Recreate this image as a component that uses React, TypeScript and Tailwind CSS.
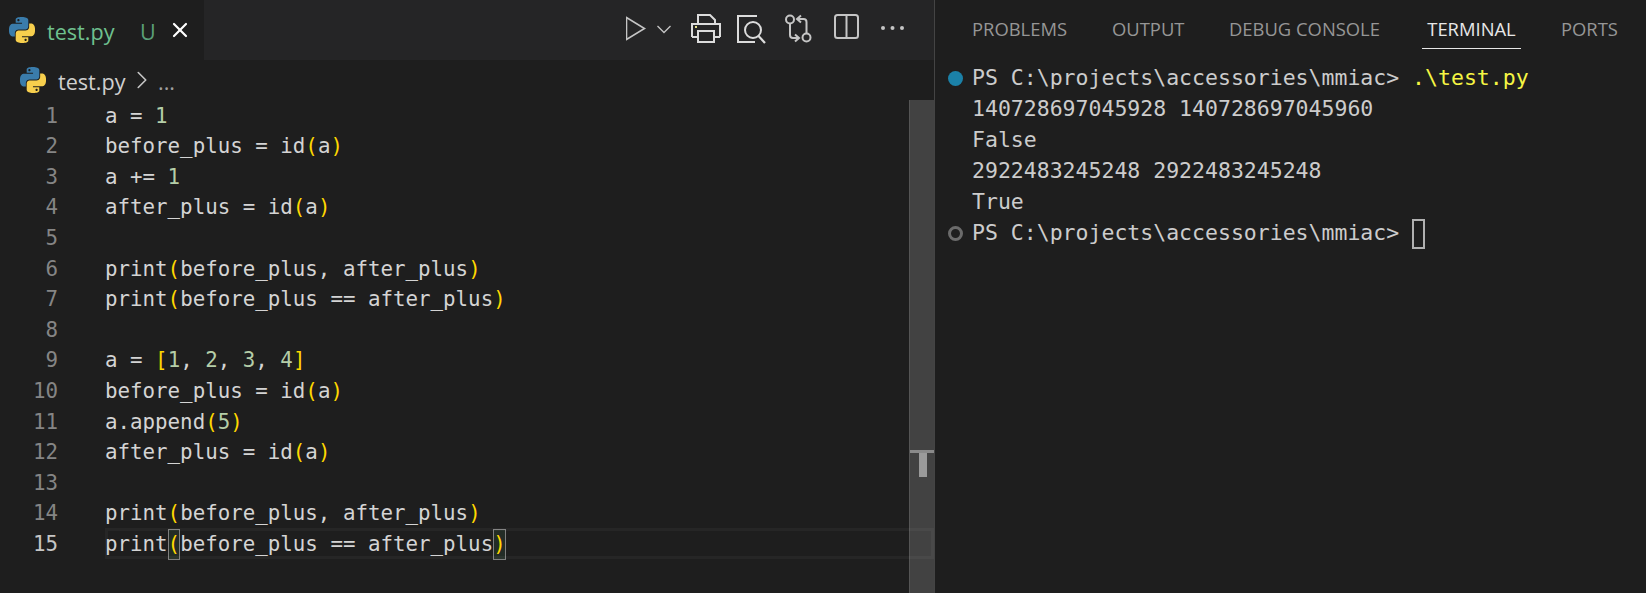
import { ChevronRight, X } from 'lucide-react';
import React from 'react';

const BLUE = 'M14.25.18l.9.2.73.26.59.3.45.32.34.34.25.34.16.33.1.3.04.26.02.2-.01.13V8.5l-.05.63-.13.55-.21.46-.26.38-.3.31-.33.25-.35.19-.35.14-.33.1-.3.07-.26.04-.21.02H8.77l-.69.05-.59.14-.5.22-.41.27-.33.32-.27.35-.2.36-.15.37-.1.35-.07.32-.04.27-.02.21v3.06H3.17l-.21-.03-.28-.07-.32-.12-.35-.18-.36-.26-.36-.36-.35-.46-.32-.59-.28-.73-.21-.88-.14-1.05-.05-1.23.06-1.22.16-1.04.24-.87.32-.71.36-.57.4-.44.42-.33.42-.24.4-.16.36-.1.32-.05.24-.01h.16l.06.01h8.16v-.83H6.18l-.01-2.75-.02-.37.05-.34.11-.31.17-.28.25-.26.31-.23.38-.2.44-.18.51-.15.58-.12.64-.1.71-.06.77-.04.84-.02 1.27.05zm-6.3 1.98l-.23.33-.08.41.08.41.23.34.33.22.41.09.41-.09.33-.22.23-.34.08-.41-.08-.41-.23-.33-.33-.22-.41-.09-.41.09z';
const YELLOW = 'M21.04 6.11l.28.06.32.12.35.18.36.27.36.35.35.47.32.59.28.73.21.88.14 1.04.05 1.23-.06 1.23-.16 1.04-.24.86-.32.71-.36.57-.4.45-.42.33-.42.24-.4.16-.36.09-.32.05-.24.02-.16-.01h-8.22v.82h5.84l.01 2.76.02.36-.05.34-.11.31-.17.29-.25.25-.31.24-.38.2-.44.17-.51.15-.58.13-.64.09-.71.07-.77.04-.84.01-1.27-.04-1.07-.14-.9-.2-.73-.25-.59-.3-.45-.33-.34-.34-.25-.34-.16-.33-.1-.3-.04-.25-.02-.2.01-.13v-5.34l.05-.64.13-.54.21-.46.26-.38.3-.32.33-.24.35-.2.35-.14.33-.1.3-.06.26-.04.21-.02.13-.01h5.84l.69-.05.59-.14.5-.21.41-.28.33-.32.27-.35.2-.36.15-.36.1-.35.07-.32.04-.28.02-.21V6.07h2.09l.14.01zm-6.47 14.25l-.23.33-.08.41.08.41.23.33.33.23.41.08.41-.08.33-.23.23-.33.08-.41-.08-.41-.23-.33-.33-.23-.41-.08-.41.08z';

function PythonIcon() {
  return (
    <svg width="26" height="26" viewBox="0 0 24 24" className="shrink-0">
      <path d={BLUE} fill="#3a7cab" fillRule="evenodd" />
      <path d={YELLOW} fill="#f7cf4d" fillRule="evenodd" />
    </svg>
  );
}

function B({ children }: { children: React.ReactNode }) {
  return <span className="text-[#ffd700]">{children}</span>;
}

function N({ children }: { children: React.ReactNode }) {
  return <span className="text-[#b5cea8]">{children}</span>;
}

const lines: React.ReactNode[] = [
  <>a = <N>1</N></>,
  <>before_plus = id<B>(</B>a<B>)</B></>,
  <>a += <N>1</N></>,
  <>after_plus = id<B>(</B>a<B>)</B></>,
  '',
  <>print<B>(</B>before_plus, after_plus<B>)</B></>,
  <>print<B>(</B>before_plus == after_plus<B>)</B></>,
  '',
  <>a = <B>[</B><N>1</N>, <N>2</N>, <N>3</N>, <N>4</N><B>]</B></>,
  <>before_plus = id<B>(</B>a<B>)</B></>,
  <>a.append<B>(</B><N>5</N><B>)</B></>,
  <>after_plus = id<B>(</B>a<B>)</B></>,
  '',
  <>print<B>(</B>before_plus, after_plus<B>)</B></>,
  <>print<span className="inline-block h-[31px] bg-[#232c26] leading-[31px] outline outline-1 -outline-offset-1 outline-[#7f7f7f]"><B>(</B></span>before_plus == after_plus<span className="inline-block h-[31px] bg-[#232c26] leading-[31px] outline outline-1 -outline-offset-1 outline-[#7f7f7f]"><B>)</B></span></>,
];

function Toolbar() {
  return (
    <div className="ml-auto flex h-full items-center pr-[13px]">
      <svg width="295" height="60" viewBox="627 0 295 60" fill="none" stroke="#c5c5c5" strokeWidth="1.6">
        <path d="M627.5 17.5v22l18-11z" strokeLinejoin="miter" />
        <path d="M658.5 26l6.5 6.5 6.5-6.5" strokeWidth="1.3" />
        <path d="M699 23v-8h12l5 5v3M693 37h6M715 37h6M693 37V24h28v13" stroke="#dcdcdc" strokeWidth="2" />
        <path d="M699 31h16v11h-16z" stroke="#dcdcdc" strokeWidth="2" />
        <path d="M696 27h2" stroke="#e5e08a" strokeWidth="2" />
        <path d="M758 16h-19v26h17" strokeWidth="2" stroke="#dcdcdc" />
        <circle cx="754" cy="30" r="8" strokeWidth="2" stroke="#dcdcdc" />
        <path d="M759.5 36l6.5 7" strokeWidth="2.2" stroke="#dcdcdc" />
        <circle cx="791" cy="19.5" r="4" strokeWidth="2" />
        <circle cx="807.5" cy="37.5" r="4" strokeWidth="2" />
        <path d="M791 24v11q0 3 3 3h6M796 34.5l4 3.5-4 3.5M807.5 33V22q0-3-3-3h-6M802 15.500l-4 3.500 4 3.500" strokeWidth="2" />
        <rect x="836" y="15" width="23" height="23" rx="2.500" strokeWidth="2" />
        <path d="M847.500 15v23" strokeWidth="2" />
        <g fill="#c5c5c5" stroke="none">
          <circle cx="884" cy="28" r="2" />
          <circle cx="893.500" cy="28" r="2" />
          <circle cx="903" cy="28" r="2" />
        </g>
      </svg>
    </div>
  );
}

export default function App() {
  return (
    <div className="flex h-[593px] w-[1646px] overflow-hidden bg-[#1e1e1e]">
      <div className="flex w-[935px] shrink-0 flex-col border-r border-[#444444]">
        <div className="flex h-[60px] bg-[#252526]">
          <div className="flex w-[204px] items-center bg-[#1e1e1e] pl-[9px] font-['Open_Sans',sans-serif] text-[21.6px]">
            <PythonIcon />
            <span className="ml-[12px] w-[68px] pt-[4px] text-[#6fc08f]">test.py</span>
            <span className="ml-[25px] pt-[4px] text-[#5a9e78]">U</span>
            <X size={24} strokeWidth={2.2} className="ml-[12px] text-white" />
          </div>
          <Toolbar />
        </div>
        <div className="flex h-[40px] items-center pl-[20px] font-['Open_Sans',sans-serif] text-[21.6px] text-[#cfcfcf]">
          <PythonIcon />
          <span className="ml-[12px] w-[68px] pt-[4px]">test.py</span>
          <ChevronRight size={30} strokeWidth={1.3} className="ml-[1px] text-[#c5c5c5]" />
          <span className="ml-[1px] pt-[4px] text-[#a0a0a0]">...</span>
        </div>
        <div className="relative flex flex-1">
          <div className="flex-1 font-['DejaVu_Sans_Mono',monospace] text-[20.8px] text-[#d4d4d4]">
            {lines.map((line, i) => (
              <div key={i} className="flex h-[30.6px] items-center whitespace-pre pt-[2px]">
                <span className={`w-[58px] text-right ${i === 14 ? 'text-[#c6c6c6]' : 'text-[#858585]'}`}>{i + 1}</span>
                <span className="ml-[47px]">{line}</span>
              </div>
            ))}
          </div>
          <div className="relative w-[25px] border-l border-[#555555] bg-[#424242]">
            <div className="mt-[350px] h-[3px] bg-[#8a8a8a]" />
            <div className="ml-[9px] h-[24px] w-[8px] bg-[#9a9a9a]" />
          </div>
          <div className="pointer-events-none absolute left-[105px] right-0 top-[428px] h-[31px] border-[3px] border-white/[0.04]" />
        </div>
      </div>
      <div className="flex-1 text-[#cccccc]">
        <div className="flex h-[49px] items-center pl-[37px] pt-[9px] font-['Open_Sans',sans-serif] text-[18.4px] text-[#969696]">
          <span className="w-[140px]">PROBLEMS</span>
          <span className="w-[117px]">OUTPUT</span>
          <span className="w-[197px]">DEBUG CONSOLE</span>
          <span className="flex h-full w-[135px] items-center">
            <span className="-mt-[9px] -ml-[4px] flex h-[49px] w-[99px] items-center justify-center border-b border-[#e7e7e7] pt-[9px] text-[#e7e7e7]">TERMINAL</span>
          </span>
          <span>PORTS</span>
        </div>
        <div className="pt-[14px] font-['DejaVu_Sans_Mono',monospace] text-[21.5px]">
          <div className="flex h-[31px] items-center whitespace-pre">
            <span className="ml-[13px] mr-[9px] h-[15px] w-[15px] rounded-full bg-[#1b81a8]" />
            {'PS C:\\projects\\accessories\\mmiac> '}<span className="text-[#f5f543]">.\test.py</span>
          </div>
          <div className="flex h-[31px] items-center pl-[37px]">140728697045928 140728697045960</div>
          <div className="flex h-[31px] items-center pl-[37px]">False</div>
          <div className="flex h-[31px] items-center pl-[37px]">2922483245248 2922483245248</div>
          <div className="flex h-[31px] items-center pl-[37px]">True</div>
          <div className="flex h-[31px] items-center whitespace-pre">
            <span className="ml-[13px] mr-[9px] h-[15px] w-[15px] rounded-full border-[3px] border-[#6b6b6b]" />
            {'PS C:\\projects\\accessories\\mmiac> '}
            <span className="h-[30px] w-[13px] border-2 border-[#b0b0b0]" />
          </div>
        </div>
      </div>
    </div>
  );
}
